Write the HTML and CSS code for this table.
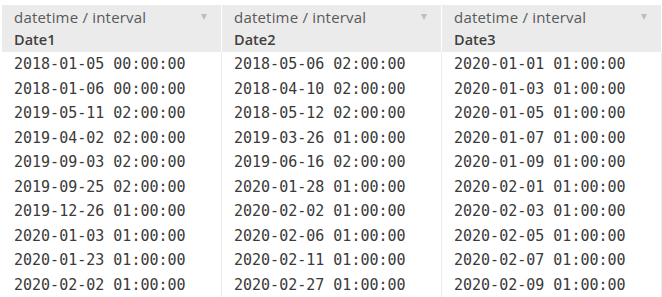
FILE: index.html
```html
<!DOCTYPE html>
<html>
<head>
<meta charset="utf-8">
<link rel="stylesheet" href="styles.css">
</head>
<body>
<div class="table">
  <div class="col">
    <div class="head">
      <div class="type"><span>datetime / interval</span><span class="caret"></span></div>
      <div class="name">Date1</div>
    </div>
    <div class="cell">2018-01-05 00:00:00</div>
    <div class="cell">2018-01-06 00:00:00</div>
    <div class="cell">2019-05-11 02:00:00</div>
    <div class="cell">2019-04-02 02:00:00</div>
    <div class="cell">2019-09-03 02:00:00</div>
    <div class="cell">2019-09-25 02:00:00</div>
    <div class="cell">2019-12-26 01:00:00</div>
    <div class="cell">2020-01-03 01:00:00</div>
    <div class="cell">2020-01-23 01:00:00</div>
    <div class="cell">2020-02-02 01:00:00</div>
  </div>
  <div class="col">
    <div class="head">
      <div class="type"><span>datetime / interval</span><span class="caret"></span></div>
      <div class="name">Date2</div>
    </div>
    <div class="cell">2018-05-06 02:00:00</div>
    <div class="cell">2018-04-10 02:00:00</div>
    <div class="cell">2018-05-12 02:00:00</div>
    <div class="cell">2019-03-26 01:00:00</div>
    <div class="cell">2019-06-16 02:00:00</div>
    <div class="cell">2020-01-28 01:00:00</div>
    <div class="cell">2020-02-02 01:00:00</div>
    <div class="cell">2020-02-06 01:00:00</div>
    <div class="cell">2020-02-11 01:00:00</div>
    <div class="cell">2020-02-27 01:00:00</div>
  </div>
  <div class="col">
    <div class="head">
      <div class="type"><span>datetime / interval</span><span class="caret"></span></div>
      <div class="name">Date3</div>
    </div>
    <div class="cell">2020-01-01 01:00:00</div>
    <div class="cell">2020-01-03 01:00:00</div>
    <div class="cell">2020-01-05 01:00:00</div>
    <div class="cell">2020-01-07 01:00:00</div>
    <div class="cell">2020-01-09 01:00:00</div>
    <div class="cell">2020-02-01 01:00:00</div>
    <div class="cell">2020-02-03 01:00:00</div>
    <div class="cell">2020-02-05 01:00:00</div>
    <div class="cell">2020-02-07 01:00:00</div>
    <div class="cell">2020-02-09 01:00:00</div>
  </div>
</div>
</body>
</html>
```
FILE: styles.css
```css
html, body {
  margin: 0;
  background: #ffffff;
  overflow: hidden;
}
.table {
  display: grid;
  grid-template-columns: 220px 220px 220px;
  padding: 5px 0 0 2px;
}
.col {
  display: flex;
  flex-direction: column;
  border-right: 1px solid #ececec;
}
.head {
  background: #ebebeb;
  height: 47px;
  box-sizing: border-box;
  padding: 1px 12px 0 12px;
  margin-right: -1px;
  border-right: 1px solid #ffffff;
  font-family: "Open Sans", "Noto Sans", sans-serif;
}
.type {
  display: flex;
  justify-content: space-between;
  align-items: center;
  height: 22px;
  font-size: 15px;
  letter-spacing: 0.2px;
  color: #595959;
}
.caret {
  width: 0;
  height: 0;
  border-left: 3px solid transparent;
  border-right: 3px solid transparent;
  border-top: 6px solid #bdbdbd;
  margin-right: 2px;
}
.name {
  height: 24px;
  line-height: 24px;
  font-size: 14.5px;
  font-weight: 600;
  color: #404040;
}
.cell {
  height: 24.5px;
  line-height: 24.5px;
  padding-left: 12px;
  font-family: "DejaVu Sans Mono", "Liberation Mono", monospace;
  font-size: 15px;
  color: #3a3a3a;
  white-space: nowrap;
}
```
